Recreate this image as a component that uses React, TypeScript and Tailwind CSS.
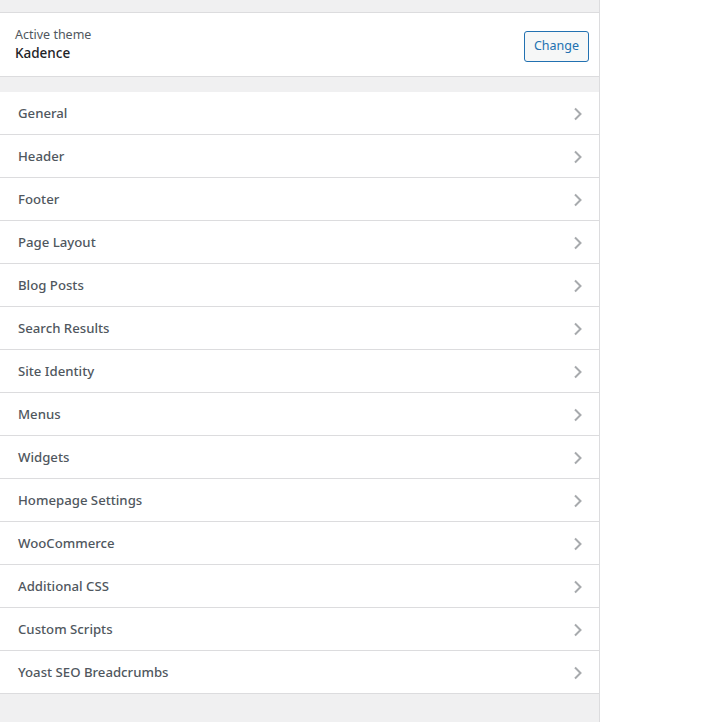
const sections = [
  'General',
  'Header',
  'Footer',
  'Page Layout',
  'Blog Posts',
  'Search Results',
  'Site Identity',
  'Menus',
  'Widgets',
  'Homepage Settings',
  'WooCommerce',
  'Additional CSS',
  'Custom Scripts',
  'Yoast SEO Breadcrumbs',
];

const Chevron = () => (
  <svg width="10" height="14" viewBox="0 0 10 14" className="shrink-0">
    <polyline points="2,1.5 7.5,7 2,12.5" fill="none" stroke="#a7aaad" strokeWidth="2" />
  </svg>
);

export default function App() {
  return (
    <div className="flex min-h-[722px] bg-white" style={{ fontFamily: '"Noto Sans", "Open Sans", sans-serif' }}>
      <div className="flex w-[600px] flex-col border-r border-[#dcdcde] bg-[#f0f0f1]">
        <div className="h-[13px] border-b border-[#dcdcde]" />

        <div className="flex h-[64px] items-start justify-between border-b border-[#dcdcde] bg-white pl-[15px] pr-[10px] pt-[13px]">
          <div className="flex flex-col">
            <span className="text-[12.5px] leading-[18px] text-[#50575e]">Active theme</span>
            <span className="text-[13.5px] font-medium leading-[18px] text-[#1d2327]">Kadence</span>
          </div>
          <button className="mt-[5px] h-[31px] rounded-[3px] border border-[#2271b1] bg-[#f6f7f7] px-[9px] text-[12.5px] text-[#2271b1]">
            Change
          </button>
        </div>

        <div className="h-[15px]" />

        <ul>
          {sections.map((name) => (
            <li
              key={name}
              className="flex h-[43px] items-center justify-between border-b border-[#dcdcde] bg-white pl-[18px] pr-[16px] pt-[1px]"
            >
              <span className="text-[13.2px] font-medium text-[#50575e]">{name}</span>
              <Chevron />
            </li>
          ))}
        </ul>

        <div className="flex-1" />
      </div>
      <div className="flex-1" />
    </div>
  );
}
